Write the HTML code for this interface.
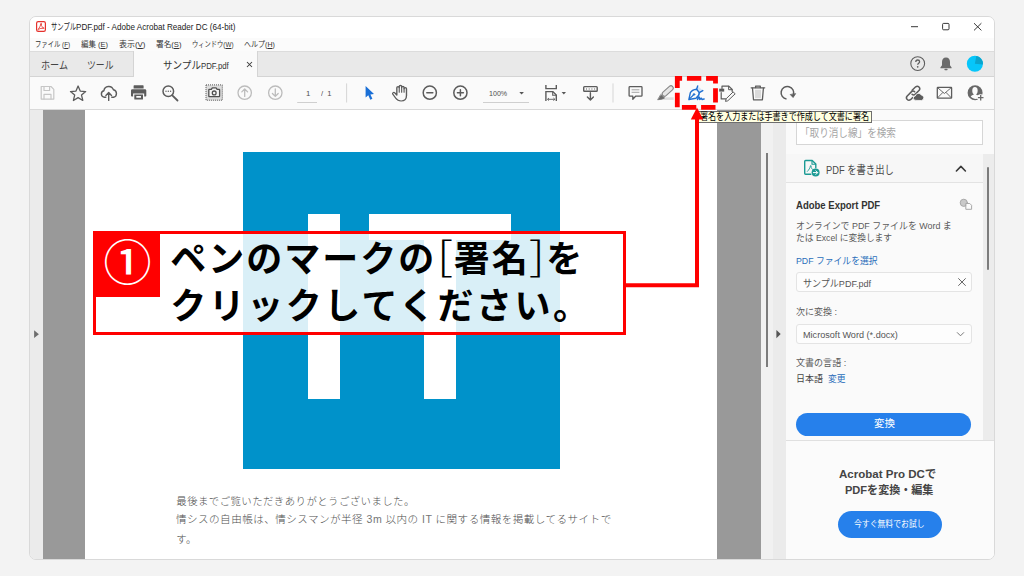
<!DOCTYPE html>
<html lang="ja">
<head>
<meta charset="utf-8">
<title>サンプルPDF.pdf - Adobe Acrobat Reader DC</title>
<style>
*{box-sizing:border-box;margin:0;padding:0}
html,body{width:1024px;height:576px;overflow:hidden;background:#f3f3f3}
body{font-family:"Liberation Sans","Noto Sans CJK JP",sans-serif;color:#333;position:relative}
.abs{position:absolute}
#win{position:absolute;left:29px;top:16px;width:966px;height:544px;border:1px solid #d9d9d9;border-radius:7px;background:#fafafa;overflow:hidden}
#inner{position:absolute;left:-30px;top:-17px;width:1024px;height:576px}
#titlebar{left:29px;top:16px;width:967px;height:21.5px;background:#fff}
#menubar{left:29px;top:37.5px;width:967px;height:14px;background:#fbfbfb}
#tabrow{left:29px;top:51px;width:967px;height:25.5px;background:#e9e9e9;border-top:1px solid #dcdcdc;border-bottom:1px solid #d4d4d4}
#acttab{left:132.6px;top:51px;width:125.9px;height:26px;background:#fafafa;border-left:1px solid #d4d4d4;border-right:1px solid #d4d4d4}
#toolbar{left:29px;top:76.5px;width:967px;height:33.5px;background:#fafafa;border-bottom:1px solid #d9d9d9}
.t{position:absolute;white-space:nowrap;line-height:1;transform-origin:0 50%}
.ico{position:absolute;overflow:visible}
u{text-decoration:underline;text-underline-offset:1px}

#lstrip{left:29px;top:110px;width:14px;height:452px;background:#ebebeb}
#docbg{left:43px;top:110px;width:717.5px;height:452px;background:#999}
#page{left:85.4px;top:110px;width:631.8px;height:452px;background:#fff}
#vtrack{left:760.5px;top:110px;width:12.5px;height:452px;background:#f1f1f1}
#vthumb{left:766px;top:153.4px;width:2px;height:214px;background:#7c7c7c}
#rstrip{left:773px;top:110px;width:12.8px;height:452px;background:#ebebeb}
#logo{left:242.600px;top:152px;width:317.200px;height:316.600px;background:#0092ca}
.w{position:absolute;background:#fff}

#panel{left:785.8px;top:110px;width:210px;height:452px;background:#fafafa}
#search{left:795.8px;top:120.4px;width:187.5px;height:24.5px;background:#fff;border:1px solid #d6d6d6}
#sechead{left:785.8px;top:154.4px;width:197px;height:28.6px;background:#f7f7f7;border-bottom:1px solid #e3e3e3}
#ptrack{left:982.8px;top:154.4px;width:13px;height:286px;background:#ececec}
#pthumb{left:986.8px;top:166.5px;width:2.6px;height:103px;background:#7c7c7c;border-radius:1px}
.box{position:absolute;left:795.8px;width:176px;background:#fdfdfd;border:1px solid #e4e4e4;border-radius:3px}
.pill{position:absolute;background:#2680eb;border-radius:20px}
#pdiv{left:785.8px;top:439.8px;width:210px;height:1px;background:#e0e0e0}
#promo{left:785.8px;top:440.8px;width:210px;height:121px;background:#fbfbfb}

#callout{left:93.2px;top:231.3px;width:532.9px;height:103.4px;background:rgba(255,255,255,0.85);border:3px solid #f00}
#numsq{left:93.2px;top:231.3px;width:66.8px;height:66.2px;background:#f00}
#tip{left:697.5px;top:110.6px;width:174.5px;height:12.6px;background:#ffffe1;border:1px solid #6e6e6e}
.big{position:absolute;white-space:nowrap;line-height:1;font-weight:bold;font-size:36px;letter-spacing:2px;color:#000}
.big i{font-style:normal;font-weight:300;font-family:"Noto Sans CJK JP","Liberation Sans",sans-serif;display:inline-block;width:18.5px;text-align:center;font-size:40px;position:relative;top:-1.3px;line-height:0;letter-spacing:0;transform:scaleX(1.3)}

</style>
</head>
<body>
<div id="win"><div id="inner">
<div id="titlebar" class="abs"></div>
<div id="menubar" class="abs"></div>
<div id="tabrow" class="abs"></div>
<div id="acttab" class="abs"></div>
<div id="toolbar" class="abs"></div>
<svg class="ico" style="left:36px;top:21px" width="10" height="11" viewBox="0 0 10 11">
  <rect x="0.6" y="0.6" width="8.8" height="9.8" rx="1.6" fill="#fff" stroke="#e5322d" stroke-width="1.2"/>
  <path d="M2.2 8.2 C3.6 6.6 4.6 4.6 4.8 2.6 C5 2 5.6 2.2 5.4 3 C5 5 6.4 6.6 7.8 6.8 C8.4 7 8.2 7.6 7.4 7.4 C5.6 7 3.8 7.4 2.6 8.6 C2.2 9 1.8 8.6 2.2 8.2Z" fill="none" stroke="#e5322d" stroke-width="0.9"/>
</svg>
<div class="t" style="left:51.20px;top:23.10px;font-size:8.60px;color:#222;transform:scaleX(0.7385);">サンプル</div>
<div class="t" style="left:76.40px;top:23.10px;font-size:8.60px;color:#222;transform:scaleX(0.9427);">PDF.pdf - Adobe Acrobat Reader DC (64-bit)</div>
<svg class="ico" style="left:905px;top:18px" width="84" height="18" viewBox="0 0 84 18">
  <path d="M6 8.7H13" stroke="#222" stroke-width="0.9" fill="none"/>
  <rect x="37.6" y="5.4" width="6.4" height="6.4" rx="1" stroke="#222" stroke-width="0.9" fill="none"/>
  <path d="M69 5.2L76.4 12.4M76.4 5.2L69 12.4" stroke="#222" stroke-width="0.9" fill="none"/>
</svg>
<div class="t" style="left:34.80px;top:41.30px;font-size:7.80px;color:#333;transform:scaleX(0.8124);">ファイル (<u>F</u>)</div>
<div class="t" style="left:81.00px;top:41.30px;font-size:7.80px;color:#333;transform:scaleX(0.9584);">編集 (<u>E</u>)</div>
<div class="t" style="left:118.50px;top:41.30px;font-size:7.80px;color:#333;transform:scaleX(1.0186);">表示(<u>V</u>)</div>
<div class="t" style="left:155.50px;top:41.30px;font-size:7.80px;color:#333;transform:scaleX(0.9802);">署名(<u>S</u>)</div>
<div class="t" style="left:191.50px;top:41.30px;font-size:7.80px;color:#333;transform:scaleX(0.8048);">ウィンドウ(<u>W</u>)</div>
<div class="t" style="left:244.00px;top:41.30px;font-size:7.80px;color:#333;transform:scaleX(0.8993);">ヘルプ(<u>H</u>)</div>
<div class="t" style="left:41.20px;top:60.35px;font-size:10.50px;color:#444;transform:scaleX(0.8657);">ホーム</div>
<div class="t" style="left:87.00px;top:60.35px;font-size:10.50px;color:#444;transform:scaleX(0.8413);">ツール</div>
<div class="t" style="left:163.00px;top:60.05px;font-size:10.50px;color:#333;transform:scaleX(0.9105);">サンプル<span style="font-size:8.6px">PDF.pdf</span></div>
<svg class="ico" style="left:246px;top:61px" width="7" height="7" viewBox="0 0 7 7"><path d="M1 1L6 6M6 1L1 6" stroke="#3c3c3c" stroke-width="1.050"/></svg>
<svg class="ico" style="left:909px;top:55px" width="76" height="18" viewBox="0 0 76 18">
  <circle cx="8.700" cy="8.600" r="6.900" fill="none" stroke="#5e5e5e" stroke-width="1.100"/>
  <path d="M6.800 6.900c0-1.200 0.800-1.900 1.900-1.900s1.900 0.700 1.900 1.700c0 1.500-1.900 1.500-1.900 3" fill="none" stroke="#5e5e5e" stroke-width="1.300"/>
  <circle cx="8.700" cy="11.800" r="0.850" fill="#5e5e5e"/>
  <path d="M37 2.6c-2.6 0-4 2-4 4.4v3.2l-1.600 2.200v0.800h11.200v-0.800l-1.600-2.200v-3.200c0-2.400-1.400-4.400-4-4.400z" fill="#6a6a6a"/>
  <rect x="35.4" y="13.8" width="3.2" height="1.4" rx="0.7" fill="#6a6a6a"/>
  <circle cx="65.900" cy="8.800" r="8.050" fill="#06c6fa"/>
  <path d="M65.900 8.800L67.300 0.900A8.050 8.050 0 0 1 73.900 9.600Z" fill="#0ba4cc"/>
</svg>
<svg class="ico" style="left:0;top:0" width="1024" height="576" viewBox="0 0 1024 576" fill="none" stroke-linecap="round" stroke-linejoin="round">
<g stroke="#c6c6c6" stroke-width="1.2"><path d="M41.200 86.500h9.800l2.800 2.800v9.800h-12.600z"/><path d="M44 86.700v3.800h5.600v-3.800M44 99v-4.600h7v4.600"/></g>
<polygon points="78.10,86.00 80.22,91.09 85.71,91.53 81.52,95.11 82.80,100.47 78.10,97.60 73.40,100.47 74.68,95.11 70.49,91.53 75.98,91.09" stroke="#5c5c5c" stroke-width="1.300"/>
<g stroke="#5c5c5c" stroke-width="1.400"><path d="M105.800 97.200h-1.300a3.300 3.300 0 0 1-0.600-6.500a4.900 4.900 0 0 1 9.500-0.900a3.800 3.800 0 0 1 0.200 7.400h-1.800"/><path d="M108.700 100.400v-7.600M105.900 95.400l2.800-2.800l2.800 2.800"/></g>
<g fill="#5c5c5c" stroke="none"><path d="M134.200 85.300h8.800a0.600 0.600 0 0 1 0.600 0.600v2.500h-10v-2.500a0.600 0.600 0 0 1 0.600-0.600z"/><path d="M132.400 89.200h12.500a1.400 1.400 0 0 1 1.400 1.400v5.200a0.800 0.800 0 0 1-0.800 0.800h-1.300v-3.200h-11.100v3.200h-1.300a0.800 0.800 0 0 1-0.800-0.800v-5.200a1.400 1.400 0 0 1 1.400-1.400z"/><path d="M134.300 94.400h8.700v4.600a0.600 0.600 0 0 1-0.600 0.600h-7.500a0.600 0.600 0 0 1-0.600-0.600z M136.300 96v1.800h4.700v-1.800z" fill-rule="evenodd"/></g>
<g stroke="#5c5c5c" stroke-width="1.500"><circle cx="168.300" cy="91.300" r="5.300"/><path d="M172.300 95.300l5.200 5.200" stroke-width="1.800"/></g><g fill="#5c5c5c"><circle cx="166" cy="91.300" r="0.700"/><circle cx="168.300" cy="91.300" r="0.700"/><circle cx="170.600" cy="91.300" r="0.700"/></g>
<rect x="206" y="84.900" width="16.300" height="15.300" fill="#dcdcdc" stroke="#555" stroke-width="1" stroke-dasharray="1 1" stroke-linecap="butt"/>
<g stroke="#505050" stroke-width="1.300"><path d="M209.300 89.300h2l1-1.500h3.800l1 1.500h2a0.500 0.500 0 0 1 0.500 0.500v6.400a0.500 0.500 0 0 1-0.500 0.500h-9.800a0.500 0.500 0 0 1-0.500-0.500v-6.400a0.500 0.500 0 0 1 0.500-0.500z" fill="#f4f4f4"/><circle cx="214.200" cy="92.900" r="1.900"/></g>
<g stroke="#bcbcbc" stroke-width="1.300"><circle cx="244.700" cy="92.700" r="6.700"/><path d="M244.700 96.400v-7.200M241.800 91.900l2.900-2.900l2.900 2.900"/><circle cx="275.300" cy="92.700" r="6.700"/><path d="M275.300 89v7.200M272.400 93.500l2.900 2.900l2.900-2.900"/></g>
<g stroke="#cfcfcf" stroke-width="1" stroke-linecap="butt"><path d="M297.200 102.500H317M483 102.500H529"/><path d="M346.600 83.400V102.500M613 83.400V102.500" stroke="#d6d6d6"/></g>
<path d="M365.600 85.900v11.600l2.700-2.300l2 4.500l2.100-0.900l-2-4.400l3.600-0.300z" fill="#1a6fd6" stroke="none"/>
<g transform="translate(392 0) scale(1.150 1) translate(-392 0)" stroke="#5c5c5c" stroke-width="1.200"><path d="M396.200 93.500v-5.800a1.050 1.050 0 0 1 2.100 0v-1.300a1.050 1.050 0 0 1 2.100 0v1a1.050 1.050 0 0 1 2.100 0v1.300a1.050 1.050 0 0 1 2.100 0v6.800c0 3.200-1.700 5.500-4.700 5.500c-2.500 0-3.600-1.100-4.600-2.700l-2.700-4.300a1.100 1.100 0 0 1 1.800-1.200l1.800 2.200z"/><path d="M398.300 87.700v4.500M400.400 87.400v4.800M402.500 88.700v3.500" stroke-width="1"/></g>
<g stroke="#5c5c5c" stroke-width="1.500"><circle cx="429.800" cy="92.700" r="6.600"/><path d="M426.800 92.700h6"/><circle cx="460.400" cy="92.700" r="6.600"/><path d="M457.400 92.700h6M460.400 89.700v6"/></g>
<g fill="#555" stroke="none"><path d="M519.300 91.900h4.600l-2.300 2.600z"/><path d="M561.600 91.900h4.400l-2.200 2.600z"/></g>
<g stroke="#5c5c5c" stroke-width="1.400" stroke-linecap="butt" stroke-linejoin="miter"><path d="M545.900 85v3.600h10.400v-3.600"/><path d="M545.900 100.900v-9.300h7l3.400 3.400v5.900"/><path d="M552.700 91.800v3.400h3.400" stroke-width="1.100"/><path d="M547.600 99.300h7.200M549 98l-1.500 1.300l1.500 1.300M553.400 98l1.500 1.300l-1.500 1.300" stroke-width="0.900"/></g>
<g stroke="#5c5c5c" stroke-width="1.400"><rect x="583.700" y="86.600" width="13.500" height="4.600" rx="0.800"/><path d="M586 89h1M588.700 89h1M591.400 89h1M594.100 89h1" stroke-width="1.200" stroke-linecap="butt"/><path d="M590.400 92.700v7M587.400 96.900l3 3l3-3"/></g>
<g stroke="#5c5c5c" stroke-width="1.300"><path d="M629.900 86.600h11.300a0.800 0.800 0 0 1 0.800 0.800v8a0.800 0.800 0 0 1-0.800 0.800h-5.600l-2.800 3v-3h-2.900a0.800 0.800 0 0 1-0.800-0.800v-8a0.800 0.800 0 0 1 0.800-0.800z"/><path d="M632 89.800h7M632 92.300h7" stroke="#9a9a9a" stroke-width="0.900"/></g>
<g><rect x="662.500" y="97.300" width="11.200" height="2.600" fill="#dedede"/><rect x="-6.300" y="-2.300" width="13.200" height="4.600" rx="2.300" transform="translate(667.500 91.200) rotate(-42)" stroke="#868686" stroke-width="1.100" fill="#e6e6e6"/><path d="M661 94.700l3.600 3.200l-2.800 1.400l-3.800 0.400z" fill="#6a6a6a" stroke="#6a6a6a" stroke-width="0.700"/></g>
<g stroke="#1f6fd0" stroke-width="1.400"><path d="M697.700 86L702.800 90.600L699.300 92.600L696.600 89.200Z" fill="#d3e2f5" stroke="none"/><path d="M688.900 99.500L690.300 92.800C691.400 90.600 694.400 89.400 696.600 89.200L699.300 92.600C699.200 94.700 698 97 696 98.200Z"/><path d="M689.500 98.900L693.400 95" stroke-width="1.100"/><circle cx="694" cy="94.400" r="0.900" fill="#1f6fd0" stroke-width="0.600"/><path d="M696.600 89.200L697.700 85.900M699.300 92.600L702.800 90.600"/><path d="M697.500 99.400c0.600-1.500 1.200-2.500 1.800-2.300c0.600 0.200-0.200 2.100 0.400 2.300c0.600 0.200 1-1.300 1.600-1.100c0.500 0.200 0.200 1 0.800 1.100c0.600 0 1.200-0.300 2-0.300" stroke-width="1.500"/></g>
<g stroke="#5c5c5c" stroke-width="1.200"><path d="M722 88.400v-2.300h6.800l3.400 3.400v2"/><path d="M728.600 86.300v3.400h3.400" stroke-width="1"/><path d="M721.200 92.600v6.300h4.400"/><rect x="719.200" y="88.700" width="5" height="2.900" fill="#5c5c5c" stroke="none"/><path d="M733.400 92.200l1.800 1.600l-7.400 7l-2.300 0.600l0.600-2.300z" stroke-width="1"/></g>
<g stroke="#5c5c5c" stroke-width="1.300"><path d="M751.200 87.800h13.500"/><path d="M755.600 87.600v-1.500h4.700v1.500"/><path d="M752.500 88.200l1 11.600h8.900l1-11.600"/><path d="M756 90.200v7.600M758 90.200v7.600M760 90.200v7.600" stroke="#aaa" stroke-width="0.800"/></g>
<g stroke="#5c5c5c" stroke-width="1.500"><path d="M786.500 99a6.300 6.300 0 1 1 6.900-4.300" stroke-linecap="butt"/><path d="M790.500 94.800l2.600 2.700l2.300-3.600z" fill="#5c5c5c" stroke-width="0.800"/></g>
<g stroke="#5c5c5c" stroke-width="1.500"><path d="M912.100 90.200l3.600-3.400a2.500 2.500 0 0 1 3.500 3.500l-3.800 3.800a2.500 2.500 0 0 1-3.300 0.200"/><path d="M914.600 91.700a2.500 2.500 0 0 0-3.300 0.200l-4.300 4.300a2.500 2.500 0 0 0 3.500 3.500l2.200-2.100"/></g><path d="M915.600 100.400a2.200 2.200 0 0 1-0.300-4.400a3.200 3.200 0 0 1 6-0.900a2.700 2.700 0 0 1 0.500 5.300z" fill="#5c5c5c" stroke="#fafafa" stroke-width="0.800"/>
<g stroke="#5c5c5c" stroke-width="1.300"><rect x="937.300" y="87.300" width="14.300" height="10.800" rx="0.600"/><path d="M937.600 87.700l6.800 5.800l6.800-5.800M937.600 97.800l5.200-5.300M951.300 97.800l-5.200-5.300" stroke-width="0.900"/></g>
<g><circle cx="975.100" cy="92.800" r="7.500" fill="#686868"/><ellipse cx="974.950" cy="90.700" rx="2.700" ry="3.700" fill="#fafafa"/><path d="M970.700 96.600C971.500 95.300 973 94.900 973.900 94.500L973.900 93L976 93L976 94.500C977 94.900 978.400 95.300 979 96.200L979.400 98C977.500 99.300 973 99.500 970.700 96.600Z" fill="#fafafa"/><circle cx="980.700" cy="97.700" r="3.400" fill="#fafafa"/><path d="M977.900 97.700h5.600M980.700 94.900v5.600" stroke="#686868" stroke-width="1.300" stroke-linecap="butt"/></g>
</svg>
<div class="t" style="left:306.00px;top:90.30px;font-size:7.80px;color:#505050;">1</div>
<div class="t" style="left:321.00px;top:90.30px;font-size:7.80px;color:#505050;transform:scaleX(0.9775);">/&nbsp;&nbsp;1</div>
<div class="t" style="left:488.80px;top:90.20px;font-size:7.80px;color:#505050;transform:scaleX(0.9121);">100%</div>
<div id="lstrip" class="abs"></div>
<div id="docbg" class="abs"></div>
<div id="page" class="abs"></div>
<div id="logo" class="abs"></div>
<div class="w" style="left:307.900px;top:213.500px;width:32.500px;height:185.100px"></div>
<div class="w" style="left:369.400px;top:213.500px;width:142px;height:26px"></div>
<div class="w" style="left:423.700px;top:213.500px;width:32.500px;height:185.100px"></div>
<div id="vtrack" class="abs"></div>
<div id="vthumb" class="abs"></div>
<div id="rstrip" class="abs"></div>
<svg class="ico" style="left:0;top:0" width="1024" height="576" viewBox="0 0 1024 576"><path d="M34.100 330.300v7.700l4.800-3.850z" fill="#6e6e6e"/><path d="M776.400 329.900v8.300l4.300-4.150z" fill="#555"/></svg>
<div class="t" style="left:176.30px;top:496.80px;font-size:10.40px;color:#4e4e4e;font-weight:300;letter-spacing:0.45px;">最後までご覧いただきありがとうございました。</div>
<div class="t" style="left:176.30px;top:515.30px;font-size:10.40px;color:#4e4e4e;font-weight:300;transform:scaleX(1.0172);letter-spacing:0.45px;">情シスの自由帳は、情シスマンが半径 <span style="color:#767676">3m</span> 以内の <span style="color:#767676">IT</span> に関する情報を掲載してるサイトで</div>
<div class="t" style="left:176.30px;top:534.80px;font-size:10.40px;color:#4e4e4e;font-weight:300;letter-spacing:0.45px;">す。</div>
<div id="panel" class="abs"></div>
<div id="search" class="abs"></div>
<div id="sechead" class="abs"></div>
<div id="ptrack" class="abs"></div>
<div id="pthumb" class="abs"></div>
<div class="box" style="top:272px;height:20.4px"></div>
<div class="box" style="top:324px;height:20.4px;width:176.7px"></div>
<div class="pill" style="left:795.8px;top:413.4px;width:175.7px;height:22.2px"></div>
<div id="pdiv" class="abs"></div>
<div id="promo" class="abs"></div>
<div class="pill" style="left:837.5px;top:510.5px;width:104.3px;height:27.5px"></div>
<svg class="ico" style="left:0;top:0" width="1024" height="576" viewBox="0 0 1024 576" fill="none" stroke-linecap="round" stroke-linejoin="round">
<g stroke="#1b9a94" stroke-width="1.400"><path d="M810.800 174.200h-5.200a0.900 0.900 0 0 1-0.900-0.900v-11.900a0.900 0.900 0 0 1 0.900-0.900h6.600l3.600 3.600v3.600"/><path d="M812 160.700v3.600h3.600" stroke-width="1.100"/><path d="M807.400 171.400c1.500-1.500 2.700-3.500 3-5.500c0.100-0.600 0.800-0.500 0.700 0.200c-0.200 1.800 1 3.400 2.300 3.800" stroke-width="0.900"/></g>
<circle cx="815.600" cy="172.600" r="4" fill="#1b9a94"/><path d="M813.400 172.600h4M815.900 170.800l1.800 1.800l-1.800 1.800" stroke="#fff" stroke-width="1"/>
<path d="M956.400 171l4.500-4.600l4.500 4.600" stroke="#3a3a3a" stroke-width="1.600"/>
<g stroke="#a8a8a8" stroke-width="1"><circle cx="963.800" cy="202.800" r="3.600" fill="#c9c9c9"/><path d="M966.200 203.500h3.600l1.800 1.800v4h-5.400z" fill="#fafafa"/></g>
<path d="M958.600 278.600l6.800 6.900M965.400 278.600l-6.800 6.900" stroke="#666" stroke-width="1"/>
<path d="M957.300 332.600l3.200 3.200l3.200-3.200" stroke="#777" stroke-width="1"/>
</svg>
<div class="t" style="left:799.60px;top:128.20px;font-size:10.80px;color:#a6a6a6;transform:scaleX(0.8882);">「取り消し線」を検索</div>
<div class="t" style="left:826.20px;top:163.60px;font-size:11.60px;color:#4a4a4a;transform:scaleX(0.8034);">PDF を書き出し</div>
<div class="t" style="left:795.80px;top:200.80px;font-size:10.20px;color:#333;font-weight:bold;transform:scaleX(0.9356);">Adobe Export PDF</div>
<div class="t" style="left:795.80px;top:220.80px;font-size:9.60px;color:#5a5a5a;transform:scaleX(0.9288);">オンラインで PDF ファイルを Word ま</div>
<div class="t" style="left:795.80px;top:233.30px;font-size:9.60px;color:#5a5a5a;transform:scaleX(0.9105);">たは Excel に変換します</div>
<div class="t" style="left:795.80px;top:255.70px;font-size:9.60px;color:#2a6ebb;transform:scaleX(0.9156);">PDF ファイルを選択</div>
<div class="t" style="left:802.80px;top:279.00px;font-size:9.80px;color:#555;transform:scaleX(0.9220);">サンプルPDF.pdf</div>
<div class="t" style="left:795.80px;top:307.40px;font-size:9.60px;color:#5a5a5a;transform:scaleX(0.9378);">次に変換 :</div>
<div class="t" style="left:802.80px;top:330.90px;font-size:9.20px;color:#555;transform:scaleX(0.9905);">Microsoft Word (*.docx)</div>
<div class="t" style="left:795.80px;top:358.40px;font-size:9.60px;color:#5a5a5a;transform:scaleX(0.9416);">文書の言語 :</div>
<div class="t" style="left:795.80px;top:374.30px;font-size:9.60px;color:#444;transform:scaleX(0.9346);">日本語</div>
<div class="t" style="left:828.00px;top:374.30px;font-size:9.60px;color:#2a6ebb;transform:scaleX(0.9121);">変更</div>
<div class="t" style="left:873.50px;top:419.40px;font-size:10.40px;color:#fff;transform:scaleX(1.0105);">変換</div>
<div class="t" style="left:839.00px;top:468.60px;font-size:11.80px;color:#444;font-weight:bold;transform:scaleX(0.9775);">Acrobat Pro DCで</div>
<div class="t" style="left:844.50px;top:484.70px;font-size:11.80px;color:#444;font-weight:bold;transform:scaleX(0.9365);">PDFを変換・編集</div>
<div class="t" style="left:854.40px;top:520.10px;font-size:8.60px;color:#fff;transform:scaleX(0.9126);">今すぐ無料でお試し</div>
</div></div>
<div id="tip" class="abs"></div>
<div class="t" style="left:700.40px;top:111.80px;font-size:10.00px;color:#000;transform:scaleX(0.8059);">署名を入力または手書きで作成して文書に署名</div>
<div id="callout" class="abs"></div>
<div id="numsq" class="abs"></div>
<div class="big" style="left:103.5px;top:240.2px;font-size:48px;color:#fff;font-weight:500;letter-spacing:0">①</div>
<div class="big" style="left:170.2px;top:242.3px">ペンのマークの<i style="left:-0.4px;width:17.5px">[</i>署名<i style="left:-1.1px;width:16.5px">]</i>を</div>
<div class="big" style="left:170.2px;top:289.2px;letter-spacing:2.5px">クリックしてください。</div>
<svg class="ico" style="left:0;top:0" width="1024" height="576" viewBox="0 0 1024 576" fill="none">
<path d="M626 285.200H697V117" stroke="#f00" stroke-width="4"/>
<path d="M697 107.600L703.200 119.600H690.800Z" fill="#f00"/>
<rect x="677.300" y="78.400" width="38.200" height="29" stroke="#f00" stroke-width="4.800" stroke-dasharray="14.400 4.800" stroke-dashoffset="9.600"/>
</svg>

</body>
</html>
